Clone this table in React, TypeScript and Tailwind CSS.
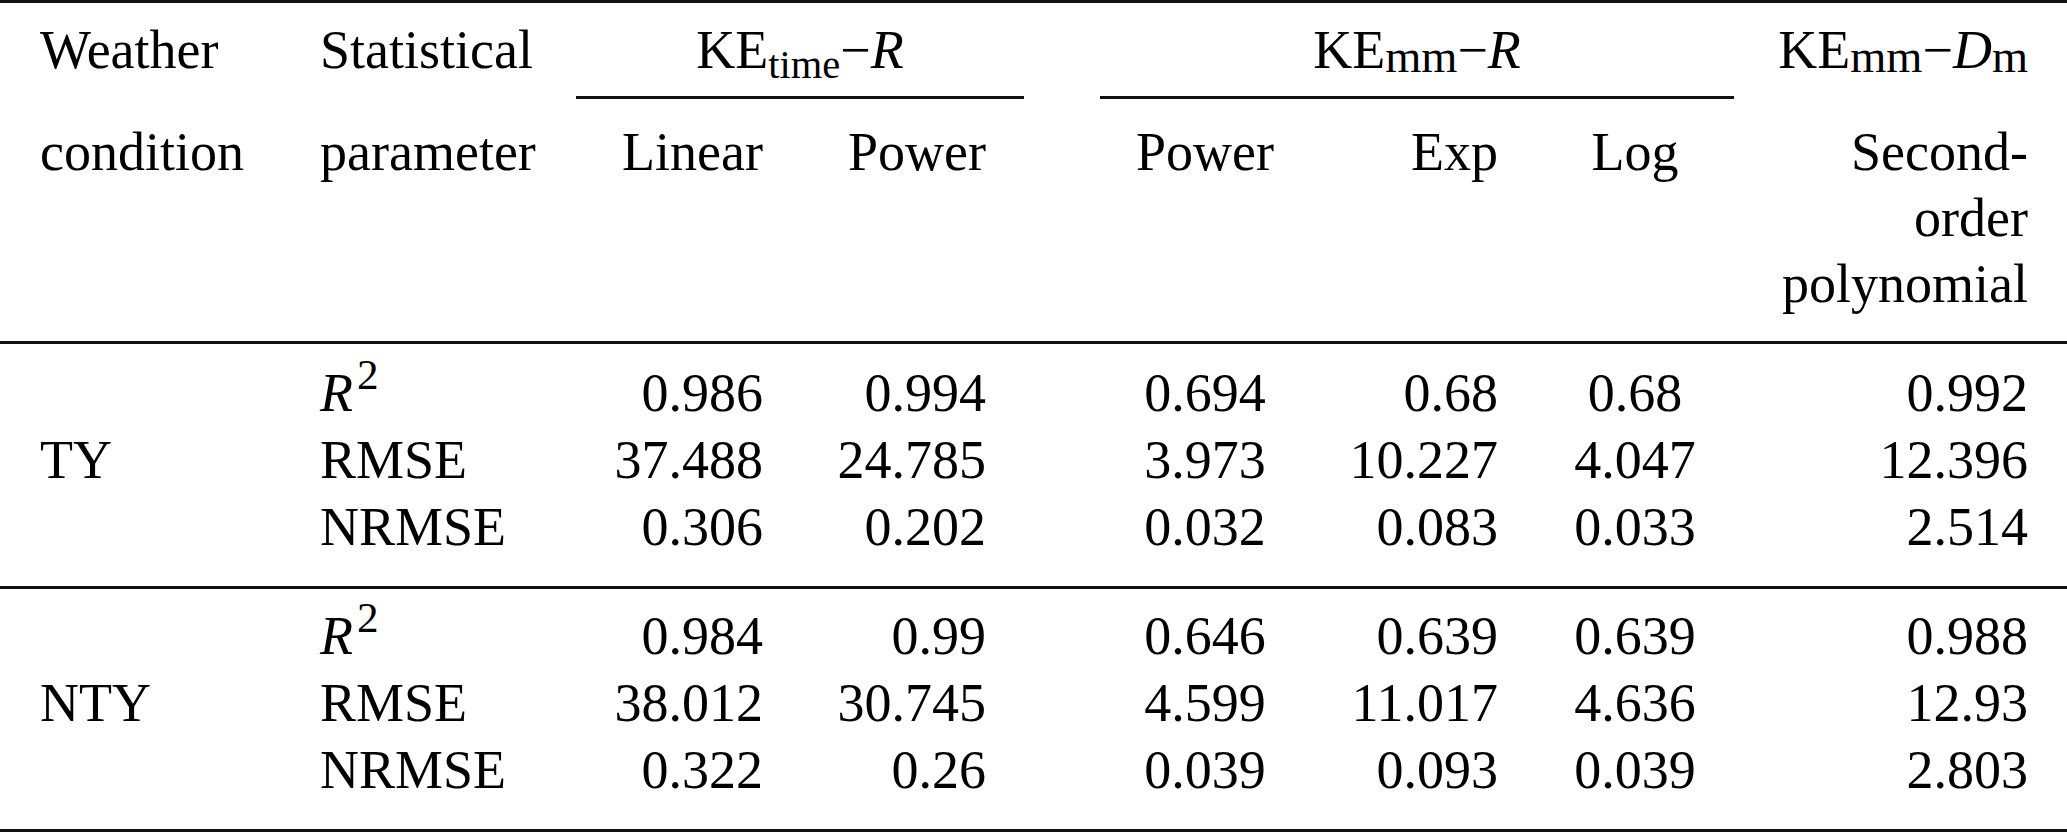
import React from 'react';

type Stat = {
  param: React.ReactNode;
  values: string[];
};

type Group = {
  condition: string;
  stats: Stat[];
};

const R2 = (
  <>
    <span className="italic">R</span>
    <sup className="ml-[4px] text-[0.8em]">2</sup>
  </>
);

const Mm = ({ children }: { children: React.ReactNode }) => (
  <sub className="text-[0.86em] bottom-[-0.08em]">{children}</sub>
);

const groups: Group[] = [
  {
    condition: 'TY',
    stats: [
      { param: R2, values: ['0.986', '0.994', '0.694', '0.68', '0.68', '0.992'] },
      { param: 'RMSE', values: ['37.488', '24.785', '3.973', '10.227', '4.047', '12.396'] },
      { param: 'NRMSE', values: ['0.306', '0.202', '0.032', '0.083', '0.033', '2.514'] },
    ],
  },
  {
    condition: 'NTY',
    stats: [
      { param: R2, values: ['0.984', '0.99', '0.646', '0.639', '0.639', '0.988'] },
      { param: 'RMSE', values: ['38.012', '30.745', '4.599', '11.017', '4.636', '12.93'] },
      { param: 'NRMSE', values: ['0.322', '0.26', '0.039', '0.093', '0.039', '2.803'] },
    ],
  },
];

// alignment + padding for each value column (Linear, Power, Power, Exp, Log, poly)
const valueCls = [
  'text-right pr-[37px]',
  'text-right pr-[38px]',
  'text-center pl-[46px]',
  'text-right pr-[38px]',
  'text-center',
  'text-right pr-[39px]',
];

const App = () => {
  return (
    <div className="w-[2067px] h-[832px] bg-white text-black font-['Liberation_Serif','Times_New_Roman',serif] text-[54px]">
      <table className="w-full table-fixed border-collapse">
        <colgroup>
          <col className="w-[300px]" />
          <col className="w-[276px]" />
          <col className="w-[224px]" />
          <col className="w-[224px]" />
          <col className="w-[316px]" />
          <col className="w-[196px]" />
          <col className="w-[198px]" />
          <col className="w-[333px]" />
        </colgroup>
        <thead>
          <tr className="border-t-[3px] border-[#111]">
            <th className="pl-[40px] pt-[14px] align-top text-left font-normal leading-[66px]">Weather</th>
            <th className="pl-[20px] pt-[14px] align-top text-left font-normal leading-[66px]">Statistical</th>
            <th colSpan={2} className="pt-[14px] align-top font-normal">
              <div className="text-center leading-[66px]">
                KE<sub>time</sub>−<span className="italic">R</span>
              </div>
              <div className="mt-[13px] h-[3px] bg-[#111]" />
            </th>
            <th colSpan={3} className="pt-[14px] align-top font-normal">
              <div className="ml-[76px]">
                <div className="text-center leading-[66px]">
                  KE<Mm>mm</Mm>−<span className="italic">R</span>
                </div>
                <div className="mt-[13px] h-[3px] bg-[#111]" />
              </div>
            </th>
            <th className="pr-[39px] pt-[14px] align-top text-right font-normal leading-[66px]">
              KE<Mm>mm</Mm>−<span className="italic">D</span>
              <Mm>m</Mm>
            </th>
          </tr>
          <tr className="border-b-[3px] border-[#111]">
            <th className="pl-[40px] pt-[20px] pb-[24px] align-top text-left font-normal leading-[66px]">condition</th>
            <th className="pl-[20px] pt-[20px] pb-[24px] align-top text-left font-normal leading-[66px]">parameter</th>
            <th className="pr-[37px] pt-[20px] pb-[24px] align-top text-right font-normal leading-[66px]">Linear</th>
            <th className="pr-[38px] pt-[20px] pb-[24px] align-top text-right font-normal leading-[66px]">Power</th>
            <th className="pl-[46px] pt-[20px] pb-[24px] align-top text-center font-normal leading-[66px]">Power</th>
            <th className="pr-[38px] pt-[20px] pb-[24px] align-top text-right font-normal leading-[66px]">Exp</th>
            <th className="pt-[20px] pb-[24px] align-top text-center font-normal leading-[66px]">Log</th>
            <th className="pr-[39px] pt-[20px] pb-[24px] align-top text-right font-normal leading-[66px]">
              Second-
              <br />
              order
              <br />
              polynomial
            </th>
          </tr>
        </thead>
        <tbody>
          {groups.map((group, gi) =>
            group.stats.map((stat, si) => {
              const first = si === 0;
              const last = si === group.stats.length - 1;
              const pad = `${first ? (gi === 0 ? 'pt-[16px]' : 'pt-[14px]') : ''} ${last ? 'pb-[25px]' : ''}`;
              return (
                <tr
                  key={`${group.condition}-${si}`}
                  className={`leading-[67px] ${last ? 'border-b-[3px] border-[#111]' : ''}`}
                >
                  <td className={`pl-[40px] align-top ${pad}`}>{si === 1 ? group.condition : ''}</td>
                  <td className={`pl-[20px] align-top ${pad}`}>{stat.param}</td>
                  {stat.values.map((v, vi) => (
                    <td key={vi} className={`align-top ${valueCls[vi]} ${pad}`}>
                      {v}
                    </td>
                  ))}
                </tr>
              );
            })
          )}
        </tbody>
      </table>
    </div>
  );
};

export default App;
